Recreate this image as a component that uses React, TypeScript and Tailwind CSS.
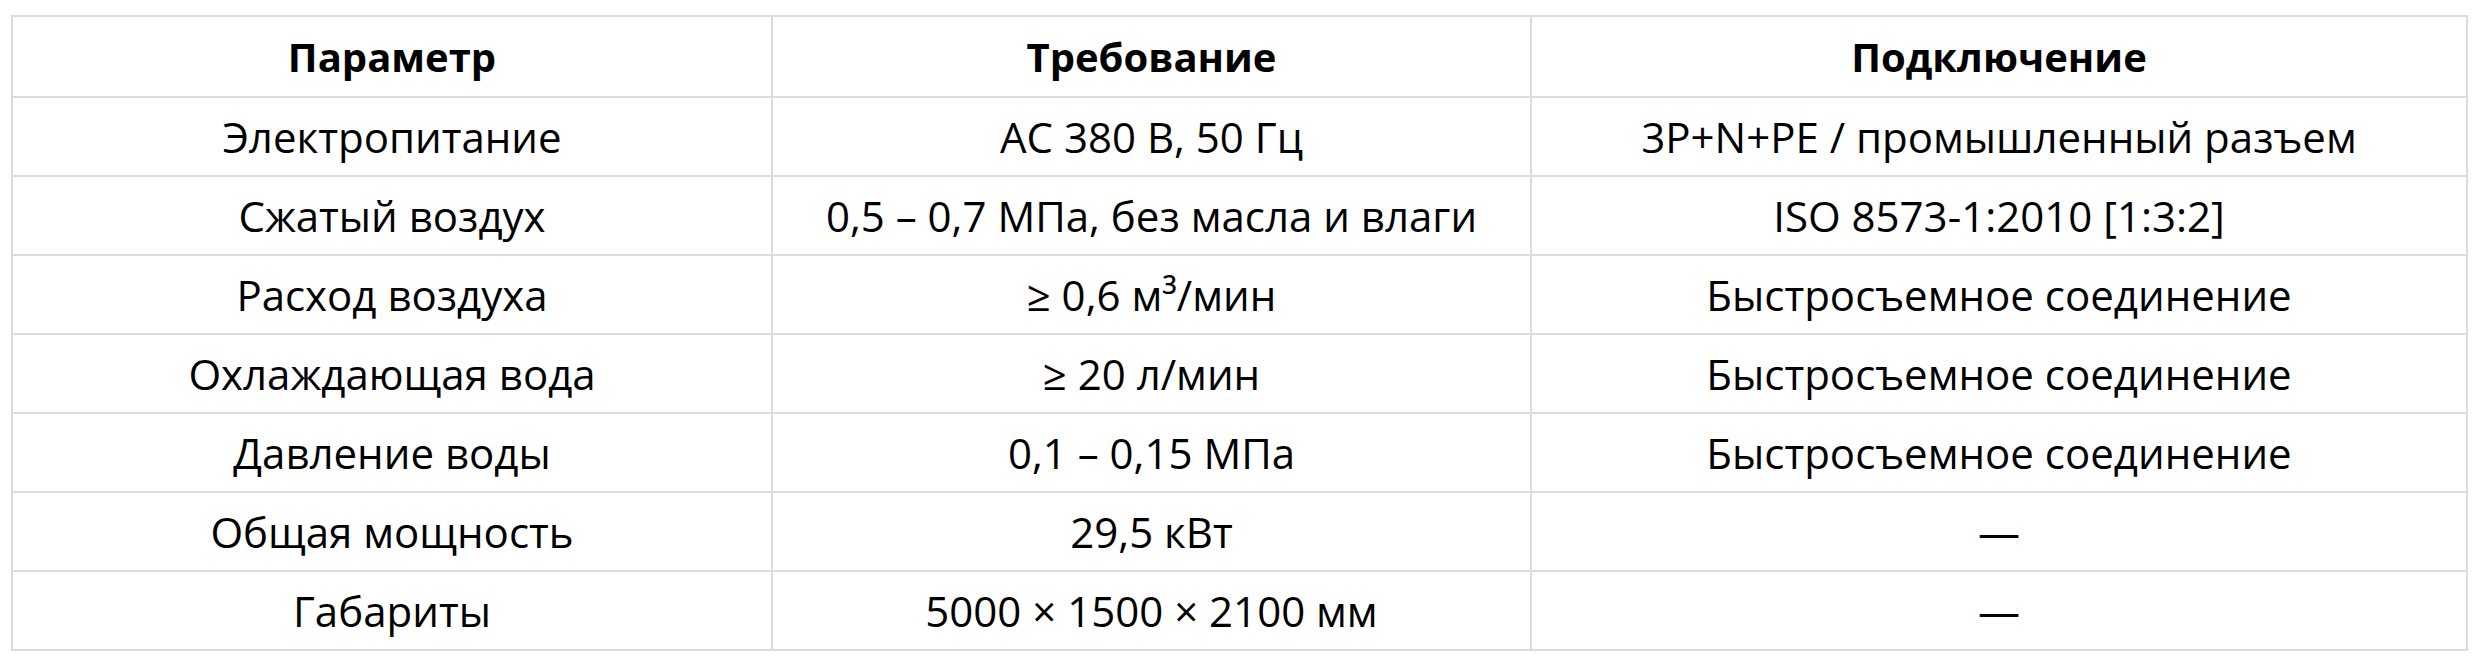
const rows: [string, string, string][] = [
  ["Электропитание", "AC 380 В, 50 Гц", "3P+N+PE / промышленный разъем"],
  ["Сжатый воздух", "0,5 – 0,7 МПа, без масла и влаги", "ISO 8573-1:2010 [1:3:2]"],
  ["Расход воздуха", "≥ 0,6 м³/мин", "Быстросъемное соединение"],
  ["Охлаждающая вода", "≥ 20 л/мин", "Быстросъемное соединение"],
  ["Давление воды", "0,1 – 0,15 МПа", "Быстросъемное соединение"],
  ["Общая мощность", "29,5 кВт", "—"],
  ["Габариты", "5000 × 1500 × 2100 мм", "—"],
];

const cell = "border-2 border-[#dcdcdc] text-center align-middle p-0";

export default function App() {
  return (
    <div className="bg-white w-[2478px] h-[664px] pt-[15px] pl-[11px] font-['Open_Sans',sans-serif] text-black text-[42px] leading-none">
      <table className="table-fixed border-collapse w-[2455px]">
        <colgroup>
          <col className="w-[760px]" />
          <col className="w-[759px]" />
          <col className="w-[936px]" />
        </colgroup>
        <thead>
          <tr className="h-[81px] text-[40px]">
            <th className={`${cell} font-bold`}>Параметр</th>
            <th className={`${cell} font-bold`}>Требование</th>
            <th className={`${cell} font-bold`}>Подключение</th>
          </tr>
        </thead>
        <tbody>
          {rows.map((r) => (
            <tr key={r[0]} className="h-[79px]">
              {r.map((c, i) => (
                <td key={i} className={cell}>
                  {c}
                </td>
              ))}
            </tr>
          ))}
        </tbody>
      </table>
    </div>
  );
}
